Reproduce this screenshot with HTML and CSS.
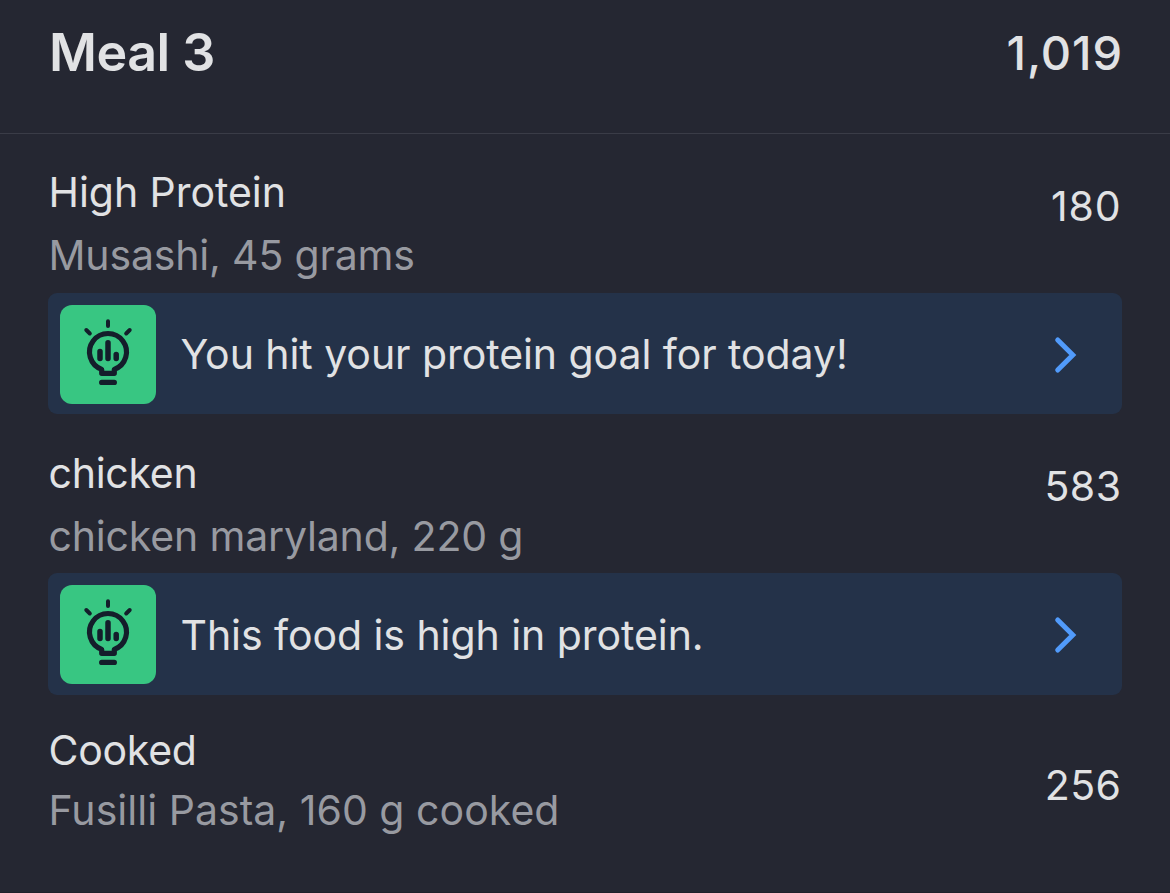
FILE: index.html
```html
<!DOCTYPE html>
<html lang="en">
<head>
<meta charset="utf-8">
<title>Meal 3</title>
<link rel="stylesheet" href="styles.css">
</head>
<body>
<svg class="defs" width="0" height="0" aria-hidden="true">
  <symbol id="bulb" viewBox="0 0 96 99">
    <g fill="none" stroke="#141e2b" stroke-linecap="round" stroke-linejoin="round">
      <path stroke-width="4" d="M48 16.200v4.700M26.300 25l3.500 3.500M69.700 25l-3.500 3.500"/>
      <path stroke-width="5.200" d="M41.700 64.400A18.500 18.500 0 1 1 54.300 64.400V68.300H41.700Z"/>
      <path stroke-width="5.500" d="M40 46.500v7M48 37.700v15.800M56.200 49.600v3.900"/>
      <path stroke-width="5.300" d="M41.700 77.400h12.600"/>
    </g>
  </symbol>
  <symbol id="chevron" viewBox="0 0 24 38">
    <path d="M3.700 4L18.800 19L3.700 34" fill="none" stroke="#519bfb" stroke-width="5" stroke-linecap="round" stroke-linejoin="miter"/>
  </symbol>
</svg>
<main class="meal">
  <header class="meal-header">
    <h1 class="meal-title">Meal 3</h1>
    <span class="meal-total">1,019</span>
  </header>
  <section class="entry entry-first">
    <div class="entry-row">
      <div class="entry-text">
        <div class="name">High Protein</div>
        <div class="detail">Musashi, 45 grams</div>
      </div>
      <span class="calories">180</span>
    </div>
    <div class="insight">
      <span class="insight-icon"><svg width="96" height="99"><use href="#bulb"/></svg></span>
      <span class="insight-text">You hit your protein goal for today!</span>
      <svg class="chevron" width="24" height="38"><use href="#chevron"/></svg>
    </div>
  </section>
  <section class="entry entry-second">
    <div class="entry-row">
      <div class="entry-text">
        <div class="name">chicken</div>
        <div class="detail">chicken maryland, 220 g</div>
      </div>
      <span class="calories">583</span>
    </div>
    <div class="insight">
      <span class="insight-icon"><svg width="96" height="99"><use href="#bulb"/></svg></span>
      <span class="insight-text">This food is high in protein.</span>
      <svg class="chevron" width="24" height="38"><use href="#chevron"/></svg>
    </div>
  </section>
  <section class="entry entry-last">
    <div class="entry-row">
      <div class="entry-text">
        <div class="name">Cooked</div>
        <div class="detail">Fusilli Pasta, 160 g cooked</div>
      </div>
      <span class="calories">256</span>
    </div>
  </section>
</main>
</body>
</html>
```
FILE: styles.css
```css
* { box-sizing: border-box; }
body {
  margin: 0;
  background: #252732;
  color: #e1e2e4;
  font-family: Inter, "Liberation Sans", sans-serif;
  font-size: 41px;
  font-weight: 400;
}
.defs { display: block; }
.meal { height: 893px; overflow: hidden; border-bottom: 1px solid #1f212b; }
.meal-header {
  display: flex;
  justify-content: space-between;
  align-items: flex-start;
  height: 134px;
  padding: 20px 47px 0 49px;
  border-bottom: 1px solid #3a3c47;
}
.meal-title { margin: 0; font-size: 52px; font-weight: 600; line-height: 66px; letter-spacing: -0.5px; }
.meal-total { font-size: 47px; font-weight: 500; line-height: 66px; letter-spacing: 0.9px; }
.entry { padding: 0 48px; }
.entry-first { padding-top: 27px; }
.entry-second { padding-top: 28px; }
.entry-last { padding-top: 25px; }
.entry-row { display: flex; justify-content: space-between; padding: 0 0.5px 5px 0.5px; }
.entry-first .entry-row { padding-bottom: 6px; }
.name, .detail { line-height: 63px; white-space: nowrap; }
.name { letter-spacing: -0.25px; }
.entry-first .name { letter-spacing: -0.05px; }
.detail { color: #989aa1; letter-spacing: -0.17px; }
.calories { padding-top: 13px; line-height: 63px; letter-spacing: 0.5px; }
.entry-first .calories { padding-top: 14px; letter-spacing: 0.9px; }
.insight {
  display: flex;
  align-items: center;
  height: 121px;
  padding: 2px 44px 0 12px;
  border-radius: 9px;
  background: #243249;
}
.entry-second .insight { height: 122px; padding-bottom: 1px; }
.insight-icon { display: flex; width: 96px; height: 99px; border-radius: 12px; background: #38c682; overflow: hidden; }
.insight-text { flex: 1; margin-left: 24.5px; padding-bottom: 2px; white-space: nowrap; letter-spacing: -0.06px; }
.entry-second .insight-text { padding-bottom: 0; }
.entry-last .name, .entry-last .detail { line-height: 60px; }
.entry-last .detail { letter-spacing: 0.03px; }
.entry-last .calories { padding-top: 34px; }
```
